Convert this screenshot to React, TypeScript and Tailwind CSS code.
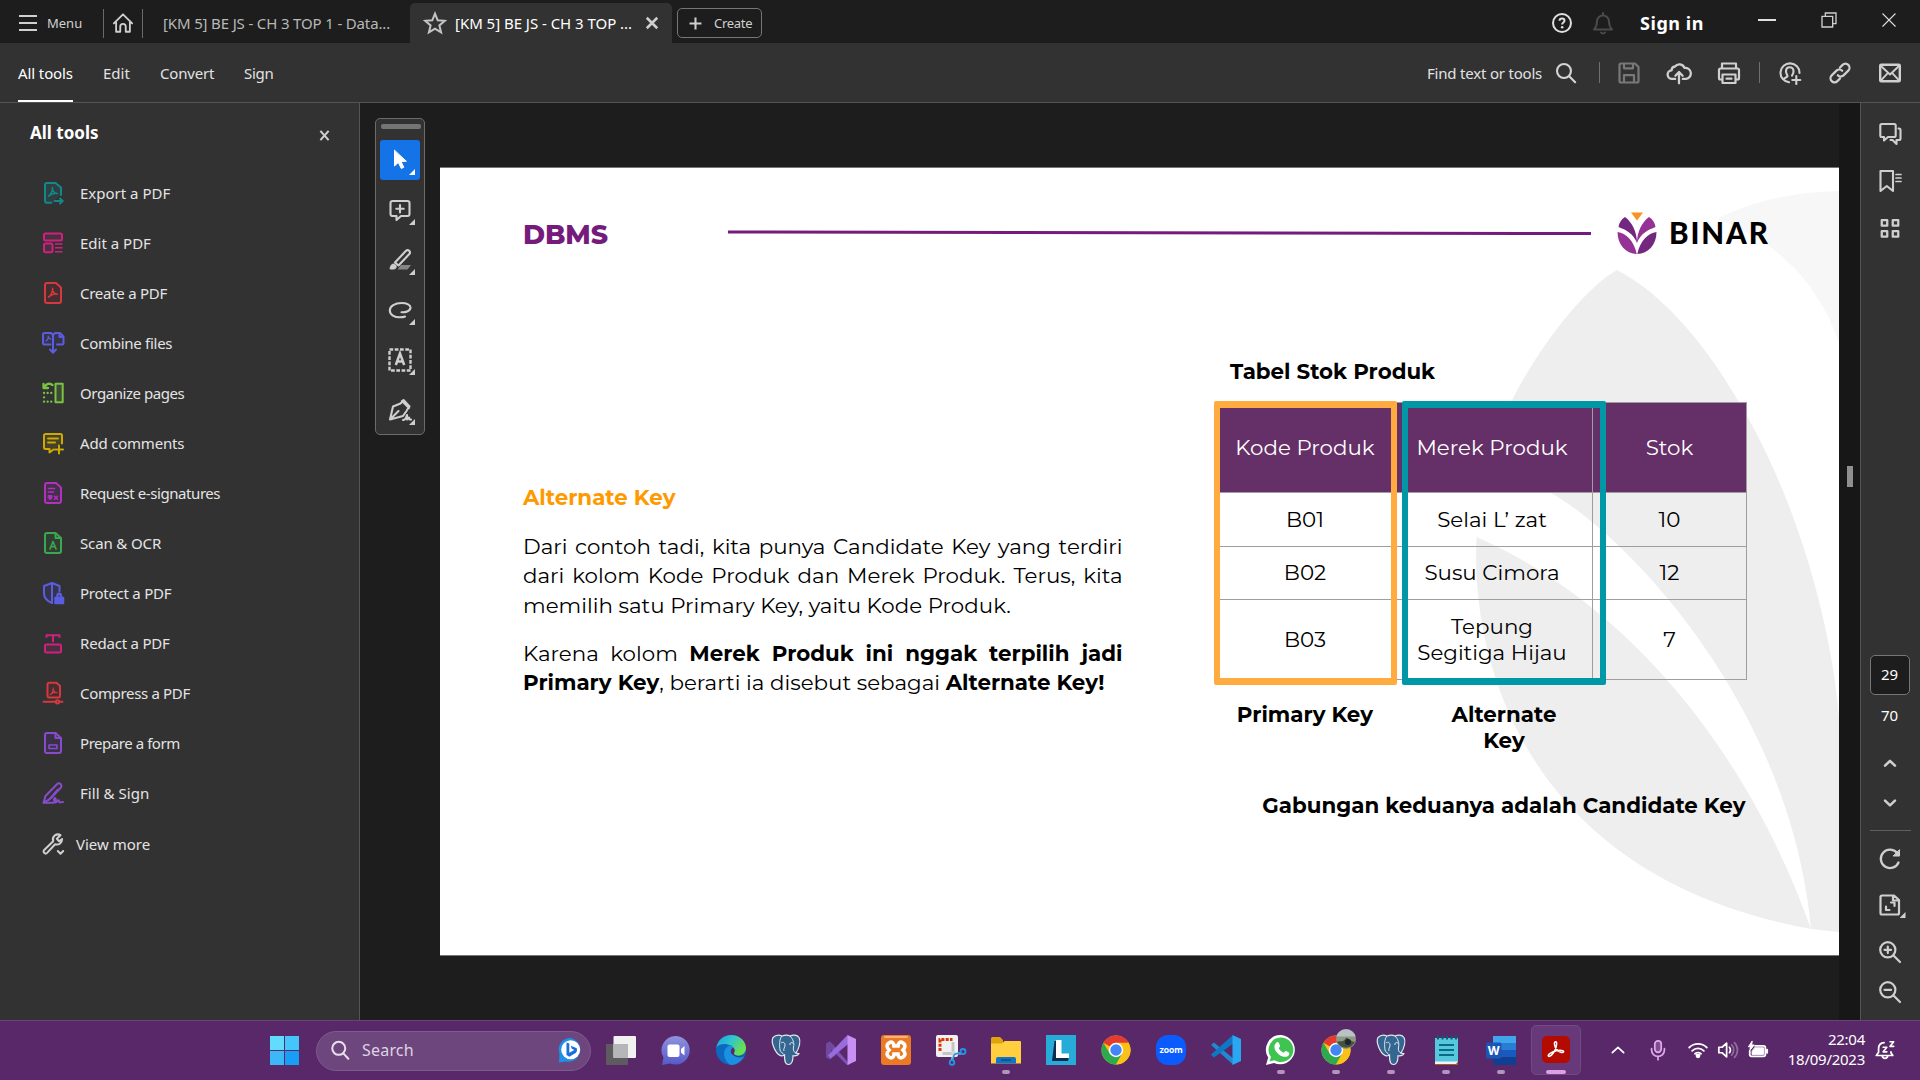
import type { ReactNode } from "react";

type P = { children?: ReactNode; c?: string; s?: number; w?: number; box?: number };

/* Stroke icon on a square grid, drawn with the current text colour. */
function Ico({ children, c = "", s = 24, w = 2, box = 24 }: P) {
  return (
    <svg
      width={s}
      height={s}
      viewBox={`0 0 ${box} ${box}`}
      fill="none"
      stroke="currentColor"
      strokeWidth={w}
      strokeLinecap="round"
      strokeLinejoin="round"
      className={`block shrink-0 ${c}`}
    >
      {children}
    </svg>
  );
}

const Swoosh = ({ t }: { t?: string }) => (
  <path
    transform={t}
    strokeWidth={1.5}
    d="M7.800 15.600c1.900-.9 4.200-4.600 4-8.600-.6 2.800 1.500 5.800 4.800 5.900-3.200-.7-6.200.3-8.800 2.700"
  />
);

const tools: { label: string; color: string; track: string; icon: ReactNode }[] = [
  {
    label: "Export a PDF",
    color: "text-[#12878c]",
    track: "tracking-[0px]",
    icon: (
      <>
        <path d="M10.500 21.800H6A2 2 0 0 1 4 19.800V4A2 2 0 0 1 6 2h8.500L20 6.500V14" fill="#303f40" />
        <Swoosh t="translate(-.3 -.5)" />
        <path d="M13.500 20h8M19 17.500l2.700 2.500-2.700 2.500" />
      </>
    ),
  },
  {
    label: "Edit a PDF",
    color: "text-[#cf2080]",
    track: "tracking-[0px]",
    icon: (
      <>
        <rect x="3" y="2.500" width="18" height="7" rx="1.500" fill="#4a2f3e" />
        <rect x="3" y="12.500" width="8.500" height="8.800" rx="1.500" fill="#4a2f3e" />
        <path d="M14 13h7.500M14 16.800h7.500M14 20.800h7.500" strokeWidth="1.500" strokeLinecap="butt" />
      </>
    ),
  },
  {
    label: "Create a PDF",
    color: "text-[#d7373f]",
    track: "tracking-[-0.270px]",
    icon: (
      <>
        <path d="M4 4A2 2 0 0 1 6 2h9L20 6.500V20a2 2 0 0 1-2 2H6a2 2 0 0 1-2-2Z" fill="#432f30" />
        <Swoosh t="translate(-.2 .3)" />
      </>
    ),
  },
  {
    label: "Combine files",
    color: "text-[#5c5ce0]",
    track: "tracking-[-0.280px]",
    icon: (
      <>
        <path d="M9.500 13.500H4A1.500 1.500 0 0 1 2 12V3.500A1.500 1.500 0 0 1 3.500 2H10l2 2 2-2h5l3.500 3.500V12a1.500 1.500 0 0 1-1.500 1.500h-5" fill="#35354a" />
        <path d="M12 3.500v18M9 18.500l3 3.200 3-3.200M18.500 2.500v3.500h3.500" />
        <path d="M5 10c1.500-1 2.500-3 2.300-5 .2 2 1 3 2.700 3.200" strokeWidth="1.200" />
      </>
    ),
  },
  {
    label: "Organize pages",
    color: "text-[#7bc143]",
    track: "tracking-[-0.440px]",
    icon: (
      <>
        <rect x="14.500" y="2.800" width="7.200" height="18.400" fill="#3f4a36" />
        <path d="M11.500 4C8.500 1.500 5 3 3.500 6M2.500 3v4h4.500" strokeWidth="2.300" />
        <path d="M3 12h9M3 16.300h.1M3 20.700h9" strokeDasharray="0.100 3.500" strokeWidth="2.300" />
      </>
    ),
  },
  {
    label: "Add comments",
    color: "text-[#ccaa00]",
    track: "tracking-[-0.200px]",
    icon: (
      <>
        <path d="M12.500 18.500 8.500 21.500V18H4.500A1.500 1.500 0 0 1 3 16.500v-12A1.500 1.500 0 0 1 4.500 3h15A1.500 1.500 0 0 1 21 4.500v8" fill="#45412b" />
        <path d="M7 7.500h10M7 11.500h7M18 14.500v8M14 18.500h8" />
      </>
    ),
  },
  {
    label: "Request e-signatures",
    color: "text-[#b130bd]",
    track: "tracking-[-0.430px]",
    icon: (
      <>
        <path d="M4 4A2 2 0 0 1 6 2h9L20 6.500V20a2 2 0 0 1-2 2H6a2 2 0 0 1-2-2Z" fill="#43304a" />
        <path d="M7.500 7.500h6M7.500 11h5" strokeWidth="1.700" />
        <path d="M7.500 14.500h3.500v2.500l-1.800 2-1.700-2Z" fill="currentColor" strokeWidth="1" />
        <path d="M13.500 15.200l3 3M16.500 15.200l-3 3" strokeWidth="1.600" />
      </>
    ),
  },
  {
    label: "Scan & OCR",
    color: "text-[#3da74e]",
    track: "tracking-[-0.130px]",
    icon: (
      <>
        <path d="M4 4A2 2 0 0 1 6 2h8.500L20 7V20a2 2 0 0 1-2 2H6a2 2 0 0 1-2-2Z" fill="#303f33" />
        <path d="M14.500 2.500V7H19.500" />
        <path d="M9 18l3-7.500L15 18M10 15.800h4" strokeWidth="1.600" />
      </>
    ),
  },
  {
    label: "Protect a PDF",
    color: "text-[#5c5ce0]",
    track: "tracking-[-0.260px]",
    icon: (
      <>
        <path d="M11 22c-5-2-8-5-8-9.500V5l8-3 7.500 3v5.500" fill="#35354a" />
        <path d="M11 2v20" />
        <path d="M14 22.500v-6h8.500v6ZM16 16v-1.500a2.200 2.200 0 0 1 4.400 0V16" fill="currentColor" strokeWidth="1.500" />
        <circle cx="18.200" cy="15" r=".8" fill="#323232" stroke="none" />
      </>
    ),
  },
  {
    label: "Redact a PDF",
    color: "text-[#cf2080]",
    track: "tracking-[-0.200px]",
    icon: (
      <>
        <path d="M5.500 6V4.300h13V6M12 4.500V10.500" />
        <rect x="4" y="13.500" width="16" height="8" rx="1.200" fill="#4a2f3e" />
      </>
    ),
  },
  {
    label: "Compress a PDF",
    color: "text-[#d7373f]",
    track: "tracking-[-0.330px]",
    icon: (
      <>
        <path d="M6.500 3A1.500 1.500 0 0 1 8 1.800h7.500L19 5v10a1.500 1.500 0 0 1-1.500 1.500H8A1.500 1.500 0 0 1 6.500 15Z" fill="#432f30" />
        <Swoosh t="translate(3 1.500) scale(.78)" />
        <path d="M2.500 20.800h12M18.500 20.800h3" />
        <circle cx="16.500" cy="20.800" r="1.600" />
      </>
    ),
  },
  {
    label: "Prepare a form",
    color: "text-[#864ccc]",
    track: "tracking-[-0.450px]",
    icon: (
      <>
        <path d="M4 4A2 2 0 0 1 6 2h8.500L20 7V20a2 2 0 0 1-2 2H6a2 2 0 0 1-2-2Z" fill="#3a3048" />
        <path d="M14.500 2.500V7H19.500" />
        <rect x="8" y="14" width="8" height="3.500" strokeWidth="1.600" />
      </>
    ),
  },
  {
    label: "Fill & Sign",
    color: "text-[#864ccc]",
    track: "tracking-[0.050px]",
    icon: (
      <>
        <path d="M16 3.200a2.500 2.500 0 0 1 3.700 3.500L9 18l-6.500 3.700L4.500 15Z" />
        <path d="M7 19.500 16.500 8.500" strokeWidth="1.300" />
        <path d="M3 21.800h9.500c2.500-1 3-4.500 1.500-4.800-1.500 0-1.500 4 .5 4.500 1.500 0 2-2.500 3-2.200s0 2 1.500 2.200 1-1 3-.5" />
      </>
    ),
  },
];

function TopBar() {
  return (
    <header className="flex h-[43px] shrink-0 items-center bg-[#1d1d1d] pt-[3px] text-[#d0d0d0]">
      <div className="ml-[19px] flex w-[84px] items-center gap-[10px]">
        <div className="flex w-[18px] flex-col gap-[5px]">
          <i className="h-[2px] bg-[#d0d0d0]" />
          <i className="h-[2px] bg-[#d0d0d0]" />
          <i className="h-[2px] bg-[#d0d0d0]" />
        </div>
        <span className="pt-px text-[13px]">Menu</span>
      </div>
      <div className="flex h-[29px] w-[40px] items-center justify-center border-x border-[#6a6a6a]">
        <Ico s={22} w={2}>
          <path d="M2 12.500 12 2.500l10 10M4.500 11v10.500H9V16a3 3 0 0 1 6 0v5.500h4.500V11" />
        </Ico>
      </div>
      <div className="ml-[20px] w-[247px] text-[15px] tracking-[-0.150px] whitespace-nowrap text-[#b8b8b8]">
        [KM 5] BE JS - CH 3 TOP 1 - Data...
      </div>
      <div className="flex h-[40px] w-[262px] items-center rounded-t-[5px] bg-[#323232] text-white">
        <Ico s={24} w={2} c="ml-[13px] text-[#c4c4c4]">
          <path strokeLinejoin="miter" d="m12 2.600 2.700 6.700 7.100.500-5.400 4.600 1.700 7-6.100-3.800-6.100 3.800 1.700-7L2.200 9.800l7.100-.500Z" />
        </Ico>
        <span className="ml-[8px] w-[190px] text-[15px] tracking-[-0.030px] whitespace-nowrap">[KM 5] BE JS - CH 3 TOP ...</span>
        <Ico s={14} w={4.400} c="text-[#cfcfcf]">
          <path strokeLinecap="butt" d="M3 3l18 18M21 3 3 21" />
        </Ico>
      </div>
      <div className="ml-[5px] flex h-[30px] w-[85px] items-center rounded-[5px] border border-[#767676] pl-[11px]">
        <Ico s={13} w={3.800} c="text-[#d0d0d0]">
          <path strokeLinecap="butt" d="M12 1v22M1 12h22" />
        </Ico>
        <span className="ml-[12px] pt-px text-[13px] tracking-[-0.300px]">Create</span>
      </div>
      <Ico s={22} w={2.200} c="ml-auto text-[#e0e0e0]">
        <circle cx="12" cy="12" r="9.800" />
        <path d="M9.300 9.600c.2-3.400 5.400-3.200 5.400-.1 0 1.900-2.500 2-2.500 4" strokeWidth="2.200" strokeLinecap="butt" />
        <circle cx="12.200" cy="16.700" r="1.400" fill="currentColor" stroke="none" />
      </Ico>
      <Ico s={24} w={2} c="ml-[18px] text-[#4b4b4b]">
        <path d="M3 18.500c2-2 3-4 3-8a6 6 0 0 1 12 0c0 4 1 6 3 8ZM10 21.500c1 1.300 3 1.300 4 0M12 2v2" />
      </Ico>
      <span className="ml-[25px] w-[64px] text-[18px] leading-none font-bold tracking-[0.550px] whitespace-nowrap text-white">Sign in</span>
      <div className="ml-[54px] flex -translate-y-[3px] items-center">
        <div className="h-[2px] w-[18px] bg-[#e0e0e0]" />
        <Ico s={16} w={2} c="ml-[45px] text-[#d0d0d0]">
          <path strokeLinejoin="miter" d="M1.500 6.500h16v16h-16ZM6.500 6V1.500h16v16H18" />
        </Ico>
        <Ico s={14} w={2.400} c="mr-[24px] ml-[45px] text-[#e0e0e0]">
          <path d="M1.500 1.500l21 21M22.500 1.500l-21 21" />
        </Ico>
      </div>
    </header>
  );
}

function ToolBar() {
  return (
    <nav className="flex h-[60px] shrink-0 items-center border-b border-[#545454] bg-[#323232] text-[15px] text-[#e2e2e2]">
      <div className="ml-[18px] flex h-full w-[55px] flex-col justify-between text-white">
        <span className="mt-[19px] leading-[22px] tracking-[-0.100px] whitespace-nowrap">All tools</span>
        <i className="h-[2px] bg-white" />
      </div>
      <span className="ml-[30px] w-[57px] pt-px">Edit</span>
      <span className="w-[84px] pt-px tracking-[-0.200px]">Convert</span>
      <span className="pt-px tracking-[-0.300px]">Sign</span>
      <span className="ml-auto w-[127px] pt-px tracking-[-0.200px] whitespace-nowrap">Find text or tools</span>
      <Ico s={22} w={2.300} c="ml-px text-[#d4d4d4]">
        <circle cx="9.800" cy="9.800" r="7.600" />
        <path d="m15.500 15.500 6.500 6.500" />
      </Ico>
      <i className="ml-[22px] h-[21px] w-px bg-[#6e6e6e]" />
      <Ico s={24} w={2.200} c="ml-[17px] text-[#787878]">
        <path d="M2.500 4A1.500 1.500 0 0 1 4 2.500h14L21.500 6v14a1.500 1.500 0 0 1-1.500 1.500H4A1.500 1.500 0 0 1 2.500 20ZM7 2.500v4.800h9V2.500M7 21.500v-7.300h10v7.300" />
      </Ico>
      <Ico s={26} w={2.100} c="ml-[25px] text-[#d0d0d0]">
        <path d="M8.500 17.500H5.800a4 4 0 0 1-.6-8A3.500 3.500 0 0 1 8.300 6 5 5 0 0 1 17 7.300a5 5 0 0 1 1.500 10.200h-3M12 21.500v-10M8.700 14.500 12 11l3.300 3.500" />
      </Ico>
      <Ico s={24} w={2.200} c="ml-[25px] text-[#d0d0d0]">
        <path d="M5 18.500H3.500A1.500 1.500 0 0 1 2 17V9a1.500 1.500 0 0 1 1.500-1.500h17A1.500 1.500 0 0 1 22 9v8a1.500 1.500 0 0 1-1.500 1.500H19M5 7V2.500h14V7M5.500 13.500h13v8.500h-13ZM9.500 17.700h5" />
      </Ico>
      <i className="ml-[18px] h-[21px] w-px bg-[#6e6e6e]" />
      <Ico s={24} w={2.100} c="ml-[18px] text-[#d0d0d0]">
        <path d="M11 21.300A9.500 9.500 0 1 1 21.500 12M5.500 18.500c1-2 3.500-2 4-3.300.3-1.200-1.500-2-1.500-5 0-2.300 1.500-4 3.700-4s3.800 1.700 3.800 4c0 2.500-1.200 3.200-1.500 4.500M18.300 15v8M14.300 19h8" />
      </Ico>
      <Ico s={24} w={2.200} c="ml-[26px] text-[#d0d0d0]">
        <path d="M9.800 14.200a4 4 0 0 0 5.700.2l4.800-4.800a4 4 0 0 0-5.700-5.700L12 6.500M14.200 9.800a4 4 0 0 0-5.700-.2l-4.800 4.800a4 4 0 0 0 5.700 5.700L12 17.500" />
      </Ico>
      <Ico s={24} w={2.400} c="mr-[18px] ml-[26px] text-[#d0d0d0]">
        <rect x="2.200" y="3.700" width="19.600" height="16.600" rx="1" />
        <path d="m3 5 9 8.500L21 5M3 19.300l6.500-7M21 19.300l-6.500-7" strokeWidth="1.900" />
      </Ico>
    </nav>
  );
}

function Sidebar() {
  return (
    <aside className="w-[360px] shrink-0 border-r border-[#545454] bg-[#323232]">
      <div className="flex h-[65px] items-center pr-[29px] pl-[30px]">
        <h2 className="-mt-[6px] flex-1 text-[17px] font-bold text-white">All tools</h2>
        <Ico s={11} w={4.500} c="text-[#d0d0d0]">
          <path strokeLinecap="butt" d="M3 2l18 20M21 2 3 22" />
        </Ico>
      </div>
      <ul className="text-[15px] text-[#e4e4e4]">
        {tools.map((t) => (
          <li key={t.label} className="flex h-[50px] items-center gap-[15px] pl-[41px]">
            <Ico s={24} w={2} c={t.color}>
              {t.icon}
            </Ico>
            <span className={t.track}>{t.label}</span>
          </li>
        ))}
        <li className="flex h-[52px] items-center gap-[11px] pl-[41px]">
          <Ico s={24} w={2} c="text-[#d0d0d0]">
            <path d="M19.500 3.200a5 5 0 0 0-7.300 6L3.200 18a2 2 0 0 0 2.900 2.900l8-8.600c4 1 7-1.500 7-5.300l-3 2.200-2.300-2.400Z" />
            <path d="m16.800 19 2.700 2.700 2.700-2.700" />
          </Ico>
          <span>View more</span>
        </li>
      </ul>
    </aside>
  );
}

const quick: ReactNode[] = [
  <path key="a" fill="currentColor" strokeWidth="1" d="M6.500 2.500v15.500l3.800-3.500 3 6 2.500-1.200-2.700-5.800 4.900-.2Z" />,
  <path key="b" d="M8.500 18H4.500A2 2 0 0 1 2.500 16V5a2 2 0 0 1 2-2h15a2 2 0 0 1 2 2v11a2 2 0 0 1-2 2h-6.500l-4.500 4ZM12 7v7.500M8.300 10.800h7.400" />,
  <g key="c">
    <path d="m7 14.500 11-11.700a2.300 2.300 0 0 1 3.300 3.200L10.500 17.500Z" />
    <path d="M6 16c-3 0-3.500 2-4 5h4c2.500-.3 2.500-2.500 2-3.500Z" fill="currentColor" strokeWidth="1" />
    <path d="M13 17h10l-3.500 4.500H9.500Z" fill="#858585" stroke="none" />
  </g>,
  <path key="d" d="M13.500 14.300c4.500.2 9-1.500 9-4.800 0-2.500-3.500-4.500-9-4.500C7 5 1.800 8 1.800 12.500s5 6.800 9.700 6.800c2.500 0 4.500-.3 5.500-.8" />,
  <g key="e" strokeLinecap="butt">
    <rect x="1.500" y="1.500" width="21" height="21" strokeWidth="2.400" strokeDasharray="3.700 1.550" strokeLinejoin="miter" />
    <path d="m7.800 17 4.200-11.500L16.200 17M9.500 13.500h5" strokeWidth="2.500" strokeLinejoin="miter" />
  </g>,
  <path key="f" d="m14 3 7 7M12.500 5.500l3-3.500 6 6.500-2.500 3.500M12.500 5.500 5 8.500l-3 13 13-3.500 3.500-5M2.500 21l8-8M15 22c2 0 3.500-3 4-5v4.500l2-2 .5 2h1.500" />,
];

function QuickTools() {
  return (
    <div className="absolute top-[15px] left-[15px] flex h-[317px] w-[50px] flex-col items-center rounded-[5px] border border-[#6b6b6b] bg-[#323232] text-[#cfcfcf]">
      <i className="mt-[5px] ml-px h-[5px] w-[40px] rounded-[2px] bg-[#747474]" />
      <div className="mt-[11px] flex flex-col gap-[10px]">
        {quick.map((q, i) => (
          <div
            key={i}
            className={
              i === 0
                ? "relative flex h-[40px] w-[40px] items-center justify-center rounded-[3px] bg-[#1473e6] pr-px pb-px text-white"
                : "relative flex h-[40px] w-[40px] items-center justify-center pr-px pb-px"
            }
          >
            <Ico s={24} w={2.100}>
              {q}
            </Ico>
            <i className="absolute right-[5px] bottom-[5px] h-[6px] w-[6px] bg-current [clip-path:polygon(100%_0,100%_100%,0_100%)]" />
          </div>
        ))}
      </div>
    </div>
  );
}

const cell = "flex items-center justify-center border-r border-b border-[#9e9e9e] pb-[2px] text-center leading-[26px]";
const head = "flex items-center justify-center border-r border-b border-[#9e9e9e] bg-[#652f68] pb-[2px] text-white";

function Slide() {
  return (
    <article className="relative mt-[65px] ml-[80px] h-[787px] w-[1399px] overflow-hidden bg-white font-[Montserrat,sans-serif] text-[21.380px] text-black shadow-[0_-1px_0_#757575,0_1px_0_#757575]">
      <svg className="absolute inset-0" width="1399" height="787" viewBox="440 168 1399 787">
        <path fill="#f7f7f7" d="M1717 219C1750 202 1790 192 1839 191V343C1825 300 1790 245 1717 219Z" />
        <g fill="#eee">
          <path d="M1617 270C1665 295 1708 348 1740 404C1790 487 1830 610 1839 716V932L1811 929C1790 700 1620 530 1549 492L1511 402C1540 345 1585 288 1617 270Z" />
          <path d="M1476.500 537C1610 595 1740 730 1811 929C1540 880 1470 680 1476.500 537Z" />
        </g>
      </svg>

      <div className="relative flex h-full flex-col">
        <div className="mt-[44px] flex h-[44px] items-center pl-[83px]">
          <h1 className="w-[205px] pt-[3px] text-[26.700px] leading-none font-extrabold tracking-[-0.100px] text-[#741b7c]">DBMS</h1>
          <svg width="863" height="8" viewBox="0 0 863 8" className="-mt-[3px]">
            <path d="M0 3 863 4.600" stroke="#741b7c" strokeWidth="3" />
          </svg>
          <svg width="40" height="42" viewBox="0 0 40 42" className="-mt-[2px] ml-[26px]">
            <path d="M14 .5h12L20 8.500Z" fill="#f7931e" />
            <path d="M8 5C15 10 20 20 20 31 16 21 9 18 1.500 15 2 11 4.500 7 8 5Z" fill="#74277f" />
            <path d="M32 5C25 10 20 20 20 31 24 21 31 18 38.500 15 38 11 35.500 7 32 5Z" fill="#943296" />
            <path d="M.5 20C9 21 17 29 19.700 42 9 41.500.500 33 .5 20Z" fill="#943296" />
            <path d="M39.500 20C31 21 23 29 20.300 42 31 41.500 39.500 33 39.500 20Z" fill="#74277f" />
            <path d="M1 18.500C10 20 17.500 26 19.500 36M39 18.500C30 20 22.500 26 20.500 36" stroke="#fff" strokeWidth="1.400" fill="none" />
          </svg>
          <span className="-mt-[3px] ml-[12px] font-[Lato] text-[29.500px] leading-none font-black tracking-[1.900px]">BINAR</span>
        </div>

        <div className="flex pl-[83px]">
          <div className="mt-[226.500px] w-[599.500px] leading-[29.400px]">
            <h3 className="font-bold text-[#ff9900]">Alternate Key</h3>
            <div className="mt-[20px]">
              <p className="[text-align-last:justify]">Dari contoh tadi, kita punya Candidate Key yang terdiri</p>
              <p className="[text-align-last:justify]">dari kolom Kode Produk dan Merek Produk. Terus, kita</p>
              <p>memilih satu Primary Key, yaitu Kode Produk.</p>
            </div>
            <div className="mt-[18.800px]">
              <p className="[text-align-last:justify]">
                Karena kolom <b>Merek Produk ini nggak terpilih jadi</b>
              </p>
              <p>
                <b>Primary Key</b>, berarti ia disebut sebagai <b>Alternate Key!</b>
              </p>
            </div>
          </div>

          <div className="mt-[102px] ml-[95.500px] w-[529px] leading-[26px]">
            <h4 className="pl-[12px] font-bold">Tabel Stok Produk</h4>
            <div className="relative mt-[18px] grid grid-cols-[173px_201px_154px] grid-rows-[90px_54px_53px_80px] border-t border-l border-[#9e9e9e]">
              <div className={head}>Kode Produk</div>
              <div className={head}>Merek Produk</div>
              <div className={head}>Stok</div>
              <div className={cell}>B01</div>
              <div className={cell}>Selai L’ zat</div>
              <div className={cell}>10</div>
              <div className={cell}>B02</div>
              <div className={cell}>Susu Cimora</div>
              <div className={cell}>12</div>
              <div className={cell}>B03</div>
              <div className={cell}>
                Tepung
                <br />
                Segitiga Hijau
              </div>
              <div className={cell}>7</div>
              <i className="absolute -top-[2px] -left-[5px] h-[284px] w-[183px] rounded-[2px] border-x-6 border-y-7 border-[#ffab40]" />
              <i className="absolute -top-[2px] left-[183px] h-[284px] w-[204px] rounded-[2px] border-x-6 border-y-7 border-[#0097a7]" />
            </div>
            <div className="mt-[21px] flex text-center font-bold">
              <span className="w-[174px]">Primary Key</span>
              <span className="ml-[52px] w-[120px]">
                Alternate
                <br />
                Key
              </span>
            </div>
            <p className="mt-[39px] pr-[1.500px] text-right font-bold whitespace-nowrap">Gabungan keduanya adalah Candidate Key</p>
          </div>
        </div>
      </div>
    </article>
  );
}

function Rail() {
  return (
    <aside className="flex w-[60px] shrink-0 flex-col items-center border-l border-[#545454] bg-[#323232] pr-[2px] text-[#cfcfcf]">
      <Ico s={24} w={2.100} c="mt-[19px]">
        <path d="M6 15H3.800A1.500 1.500 0 0 1 2.300 13.500v-10A1.500 1.500 0 0 1 3.800 2h12.400a1.500 1.500 0 0 1 1.500 1.500v10a1.500 1.500 0 0 1-1.500 1.500H10l-4 3.500ZM20.500 6.500h.5a1.500 1.500 0 0 1 1.500 1.500v8.500a1.500 1.500 0 0 1-1.500 1.500h-2.500v4l-4-4h-2" />
      </Ico>
      <Ico s={24} w={2.100} c="mt-[23px]">
        <path d="M2.500 2h12.500v20l-6.200-5-6.300 5Z" />
        <path d="M18 5.500h5M18 9h5M18 12.500h5" strokeWidth="1.700" />
      </Ico>
      <Ico s={22} w={2.500} c="mt-[24px]">
        <path d="M3 3.500h6v6H3ZM15 3.500h6v6h-6ZM3 15.500h6v6H3ZM15 15.500h6v6h-6Z" />
      </Ico>
      <div className="mt-[416px] flex h-[40px] w-[40px] items-center justify-center rounded-[5px] border border-[#767676] bg-[#1d1d1d] pb-px text-[15px] text-white">29</div>
      <span className="mt-[9px] text-[15px] leading-[22px] text-white">70</span>
      <Ico s={14} w={4.400} c="mt-[30px]">
        <path d="M3.500 16.500 12 8.500l8.500 8" />
      </Ico>
      <Ico s={14} w={4.400} c="mt-[26px]">
        <path d="M3.500 8 12 16l8.500-8" />
      </Ico>
      <i className="mt-[20px] ml-[2px] h-px w-[41px] bg-[#5f5f5f]" />
      <Ico s={24} w={2.300} c="mt-[16px]">
        <path d="M20.500 15.500A9.200 9.200 0 1 1 19.500 6.500L21 8" />
        <path d="M21.500 3v6h-6Z" fill="currentColor" strokeWidth="1" />
      </Ico>
      <div className="relative mt-[22px]">
        <Ico s={24} w={2.200}>
          <path d="M2.500 4A1.500 1.500 0 0 1 4 2.500h12l5 4.500v13a1.500 1.500 0 0 1-1.500 1.500H4A1.500 1.500 0 0 1 2.500 20ZM15 3v4.500h5.500" />
          <path d="M8 13.500v3.500h3.500M13 9.500h3.500V13" />
        </Ico>
        <i className="absolute -right-[4px] -bottom-[1px] h-[6px] w-[6px] bg-[#cfcfcf] [clip-path:polygon(100%_0,100%_100%,0_100%)]" />
      </div>
      <Ico s={24} w={2.200} c="mt-[23px]">
        <circle cx="9.800" cy="9.800" r="7.600" />
        <path d="m15.500 15.500 6.500 6.500M9.800 6.500v6.600M6.500 9.800h6.600" />
      </Ico>
      <Ico s={24} w={2.200} c="mt-[16px]">
        <circle cx="9.800" cy="9.800" r="7.600" />
        <path d="m15.500 15.500 6.500 6.500M6.500 9.800h6.600" />
      </Ico>
    </aside>
  );
}

const Chrome = () => (
  <>
    <circle cx="16" cy="16" r="14.500" fill="#fbc116" />
    <path d="M16 16 3.440 8.750A14.500 14.500 0 0 1 28.560 8.750Z" fill="#e33b2e" />
    <path d="M3.440 8.750A14.500 14.500 0 0 0 16 30.500L22.300 19.600 16 16 9.700 19.600Z" fill="#2da94f" />
    <path d="M16 8.750H28.560A14.500 14.500 0 0 1 16 30.500L22.300 19.600Z" fill="#fbc116" />
    <circle cx="16" cy="16" r="7.200" fill="#fff" />
    <circle cx="16" cy="16" r="5.700" fill="#4285f4" />
  </>
);

const Elephant = () => (
  <>
    <path
      d="M3 3.500C6 .5 10 1 12 2c3-1 6-1 8 0 3-1.500 7-1.300 9 1.500 2 3.500.5 10-3 15.500l3 .6c-1 2-3.500 2.500-6 2.200 0 4-.5 8.200-4 8.700-3.500.3-4.500-2.500-4.500-9.500-2 1-3.500 1.500-4.800.3C5 18.500.5 8 3 3.500Z"
      fill="#336791"
      stroke="#e4e8ee"
      strokeWidth="1.200"
    />
    <path d="M12 2C9 5 9.500 12 10 16c.5 2.500 3 3 4.500 5M20 2c3 3 4.500 7 3.500 11-.5 3 0 5 2.500 6M11 9c2-1.500 4-.5 4 2s-2 4-1 6M23 9c-2-1-3.500 0-3 2" fill="none" stroke="#e4e8ee" strokeWidth="1" />
  </>
);

const apps: { art: ReactNode; dot?: boolean; on?: boolean }[] = [
  {
    art: (
      <>
        <rect x="1" y="10" width="22" height="21" rx="1" fill="#5d5a60" />
        <rect x="8.500" y="2" width="22.500" height="22" rx="1" fill="#f1f1f1" />
        <path d="M8.500 10H23v14H8.500Z" fill="#b6b6b8" />
      </>
    ),
  },
  {
    art: (
      <>
        <path d="M16 2A14.300 14.300 0 1 1 10 29.500L2 31l1.500-7.500A14.300 14.300 0 0 1 16 2Z" fill="url(#chat)" />
        <rect x="7.500" y="10.500" width="12" height="12.500" rx="2" fill="#fff" />
        <path d="m21 15 3.500-3v9.500L21 18.500Z" fill="#fff" />
      </>
    ),
  },
  {
    art: (
      <>
        <circle cx="16" cy="16" r="15" fill="#0c69c0" />
        <path d="M1.300 14C2.500 6 9 1 16 1c9 0 15 6.500 15 13 0 5-4 7.500-7.500 7.500-3 0-5.500-1-4.500-3 1-2.500 0-5.500-3-7C10 8.500 3 10 1.300 14Z" fill="url(#edge)" />
        <path d="M9 19.500c0-5 4-8 7-8 2.500 1.300 4 4 3 6.500-1.500 3 1.500 5.500 5.500 5.500 2 0 3.500-.5 4.500-1C26 28 21 31 16 31c-4-2-7-6-7-11.500Z" fill="#1b8fe0" />
        <path d="M18 13.500c2 1.500 2 3.500 1.200 5-.7 2 1 3.800 4.800 3.800 2.500 0 4.500-1 5.500-1.500-5 4-12 1.500-13.500-2-.7-2 .3-4 2-5.300Z" fill="#582868" />
      </>
    ),
  },
  { art: <Elephant /> },
  {
    art: (
      <>
        <path d="M1 10 5 7.500 25 30.500l-3 .5Z" fill="#7a52b8" />
        <path d="M1 9.500 4.500 7.500 10 12l-4 5 5 4-6 4.500-4-2Z" fill="#70489f" />
        <path d="M22.500 1 3 21.500l2.500 3L24.500 9Z" fill="#9a6bdc" />
        <path d="M22.500 1 31 5v22l-8.500 4Z" fill="#c88ff5" />
      </>
    ),
  },
  {
    art: (
      <>
        <rect x="1" y="1" width="30" height="30" rx="3" fill="#ec7a23" />
        <rect x="4" y="2" width="24" height="2" rx="1" fill="#f7b37c" />
        <path d="M9 9c3-2 5 0 5 3h4c0-3 2-5 5-3s2 5 0 7c2 2 3 5 0 7s-5 0-5-3h-4c0 3-2 5-5 3s-2-5 0-7c-2-2-3-5 0-7Z" fill="none" stroke="#fff" strokeWidth="3.600" />
      </>
    ),
  },
  {
    art: (
      <>
        <rect x="1" y="1" width="22" height="22" rx="2" fill="#f1f1f3" />
        <path d="M5 17V5.500h12.500" fill="none" stroke="#d83b01" strokeWidth="3" strokeDasharray="3 1.300" />
        <path d="M18 8v11.500H7.500" fill="none" stroke="#c3c5c8" strokeWidth="3" />
        <path d="m16 19 10 .5M18.500 17 17 27" stroke="#d5d5d5" strokeWidth="2" />
        <circle cx="28" cy="17.500" r="2.500" fill="none" stroke="#2196e8" strokeWidth="1.800" />
        <circle cx="17" cy="28.500" r="2.300" fill="none" stroke="#2196e8" strokeWidth="1.800" />
        <path d="m25.500 18.500-6 2-2 5.500" fill="none" stroke="#2196e8" strokeWidth="1.600" />
      </>
    ),
  },
  {
    dot: true,
    art: (
      <>
        <path d="M1 4.500A1.500 1.500 0 0 1 2.500 3H10l3 3v6H1Z" fill="#e0a30c" />
        <path d="M1 9.500h11L14.500 7H30a1 1 0 0 1 1 1v21.500H1Z" fill="#ffcf40" />
        <path d="M6 29.500V25a2 2 0 0 1 2-2h16a2 2 0 0 1 2 2v4.500Z" fill="#1373c4" />
        <path d="M11 26h10" stroke="#0a4a86" strokeWidth="1.500" />
      </>
    ),
  },
  {
    art: (
      <>
        <rect x="1" y="1" width="30" height="30" fill="#27abd9" />
        <path d="M9.500 7 7 27h16l1-4H13V7Z" fill="#0d2c4f" />
        <path d="M11 6h5.500v13.500H24V24H11Z" fill="#fff" />
      </>
    ),
  },
  { art: <Chrome /> },
  {
    art: (
      <>
        <rect x="1" y="1" width="30" height="30" rx="12" fill="#0b5cff" />
        <text x="16" y="18.800" textAnchor="middle" fontFamily="Montserrat" fontWeight="700" fontSize="8" fill="#fff">
          zoom
        </text>
      </>
    ),
  },
  {
    art: (
      <>
        <path d="m1 11 3-2.500L24 25l-1 5.500Z" fill="#1f8ad2" />
        <path d="M23 1 1 20.500 4 23.500 24 9Z" fill="#0f78c4" />
        <path d="m22.500 1 8.500 4v22l-8.500 4Z" fill="#2aa7f2" />
      </>
    ),
  },
  {
    dot: true,
    art: (
      <>
        <path d="M16.500 1A14.700 14.700 0 1 1 9 29L1 31l2.200-7.500A14.700 14.700 0 0 1 16.500 1Z" fill="#fff" />
        <path d="M16.500 3.500A12.300 12.300 0 1 1 9.500 26.200L4.500 27.500 6 23A12.300 12.300 0 0 1 16.500 3.500Z" fill="#3fc351" />
        <path d="M11.500 8.500c1-.7 2-.4 2.500.7l1 2.300c.3 1-.3 1.700-1.300 2.700 1.300 2.300 3 3.700 5 4.500 1-1.200 1.800-2 2.500-1.700l2.600 1.400c1 .6.700 3.600-2.600 4.400-3 .7-6.700-1-9.500-4.500-3-3.800-3-7.500-.2-9.800Z" fill="#fff" />
      </>
    ),
  },
  {
    dot: true,
    art: (
      <>
        <Chrome />
        <circle cx="26" cy="5" r="10" fill="#8d9a86" />
        <path d="M16.400 2.500a10 10 0 0 1 19.200 0Z" fill="#b9c3c6" />
        <path d="M17 8c4-2 6 1 9-4 2-1 4 4 9 4a10 10 0 0 1-18 0Z" fill="#47513f" />
        <circle cx="28" cy="8" r="3" fill="#20242c" />
      </>
    ),
  },
  { art: <Elephant />, dot: true },
  {
    dot: true,
    art: (
      <>
        <rect x="5" y="4" width="23" height="26" fill="#55c8de" />
        <path d="M5 28h23v3H5Z" fill="#a85b12" />
        <path d="M5 27.500h23l-2 2.500H5Z" fill="#f3f3f3" />
        <path d="M8 1.500v4M12.500 1.500v4M17 1.500v4M21.500 1.500v4M26 1.500v4" stroke="#0f5a76" strokeWidth="2" />
        <path d="M9 11h15M9 16h15M9 21h15" stroke="#0b6a86" strokeWidth="1.800" />
      </>
    ),
  },
  {
    dot: true,
    art: (
      <>
        <path d="M8 2h23v8H8Z" fill="#41a5ee" />
        <path d="M8 9h23v8H8Z" fill="#2b7cd3" />
        <path d="M8 16h23v8H8Z" fill="#185abd" />
        <path d="M8 23h23v8H8Z" fill="#103f91" />
        <rect x="1" y="8.500" width="15.500" height="16" rx="1.500" fill="#1a56b5" />
        <text x="8.700" y="21" textAnchor="middle" fontFamily="Inter" fontWeight="700" fontSize="12" fill="#fff">
          W
        </text>
      </>
    ),
  },
  {
    on: true,
    art: (
      <>
        <rect x="2" y="2" width="28" height="27" rx="5" fill="#b30b00" />
        <path d="M8.300 22c-.8-1.600 4-4.300 8-5.200s7.700-.3 7.300 1-3.600.9-6.400-1.700-3.600-8-1.700-8.400 1.300 4.400-.5 8.400-5.400 7.300-6.700 5.900Z" fill="none" stroke="#fff" strokeWidth="1.500" />
      </>
    ),
  },
];

function Taskbar() {
  return (
    <footer className="flex h-[60px] shrink-0 items-center border-t border-[#67437a] bg-[#582868] text-white">
      <div className="ml-[270px] grid h-[29px] w-[29px] grid-cols-2 gap-px">
        <i className="bg-[#62dcfb]" />
        <i className="bg-[#45c6fa]" />
        <i className="bg-[#3cb8f8]" />
        <i className="bg-[#189ff5]" />
      </div>
      <div className="ml-[17px] flex h-[40px] w-[275px] items-center rounded-full border border-[#80598f] bg-[#6e467e] pr-[7px] pb-px pl-[13px]">
        <Ico s={20} w={2.400} c="text-[#e8dfec]">
          <circle cx="10.500" cy="10" r="7.800" />
          <path d="m16 16 6 6.500" />
        </Ico>
        <span className="ml-[12px] flex-1 text-[16px] tracking-[0.200px] text-[#dfd3e4]">Search</span>
        <svg width="25" height="26" viewBox="0 0 25 26">
          <path d="M12.500 1A11.700 11.700 0 1 1 8 24.500L1 25.500l.5-8.500A11.700 11.700 0 0 1 12.500 1Z" fill="#1f8fe8" />
          <circle cx="12.700" cy="12.800" r="9.500" fill="#fff" />
          <path d="M8.500 5.500 11.300 6.500v9.300l5-2.800-2.500-1.200-1-3 6 2.500c.7 3-.3 4.200-2 5.200l-5.500 3.200-2.800-1.600Z" fill="#1a6fdc" />
        </svg>
      </div>
      <svg width="0" height="0">
        <defs>
          <linearGradient id="edge" x1="0" y1="0" x2="1" y2="0.500">
            <stop offset="0" stopColor="#1e9fdc" />
            <stop offset="0.500" stopColor="#2fc4cf" />
            <stop offset="1" stopColor="#6be04c" />
          </linearGradient>
          <linearGradient id="chat" x1="0" y1="0" x2="0" y2="1">
            <stop offset="0" stopColor="#8f93dc" />
            <stop offset="1" stopColor="#5559c8" />
          </linearGradient>
        </defs>
      </svg>
      <div className="ml-[2px] flex h-full">
        {apps.map((a, i) => (
          <div key={i} className="flex h-full w-[55px] items-center justify-center pb-px">
            <div
              className={
                a.on
                  ? "relative flex h-[50px] w-[50px] items-center justify-center rounded-[5px] border border-[#704a80] bg-[#67397a]"
                  : "relative flex h-[50px] w-[50px] items-center justify-center"
              }
            >
              <svg width="32" height="32" viewBox="0 0 32 32" className="block overflow-visible">
                {a.art}
              </svg>
              {a.dot && <i className="absolute bottom-[1px] left-[21px] h-[4px] w-[8px] rounded-full bg-[#b195bb]" />}
              {a.on && <i className="absolute bottom-0 left-[14px] h-[4px] w-[20px] rounded-full bg-[#dc9ee4]" />}
            </div>
          </div>
        ))}
      </div>
      <Ico s={16} w={2.600} c="mb-px ml-[27px]">
        <path d="m3.500 16 8.500-8 8.500 8" />
      </Ico>
      <Ico s={22} w={1.900} c="mb-px ml-[21px] text-[#e3a8ec]">
        <rect x="8.500" y="2" width="7" height="12.500" rx="3.500" fill="#7d4f8c" />
        <path d="M5 10.500v1.500a7 7 0 0 0 14 0v-1.500M12 19v3.500" />
      </Ico>
      <Ico s={20} w={2.200} c="mb-[2px] ml-[19px]">
        <path d="M1.500 9a15 15 0 0 1 21 0M5 13a10 10 0 0 1 14 0M8.500 16.500a5 5 0 0 1 7 0" />
        <circle cx="12" cy="19" r="1.800" fill="currentColor" />
      </Ico>
      <Ico s={22} w={1.900} c="mb-[2px] ml-[9px]">
        <path d="M2 9v6h3.500l5 4.500v-15L5.500 9ZM13.500 9c1.500 1.500 1.500 4.500 0 6" />
        <path d="M16 6.500c3 3 3 8 0 11M19 4c4.500 4.500 4.500 11.500 0 16" stroke="#8f6c9d" />
      </Ico>
      <Ico s={22} w={2} c="mb-[2px] ml-[8px]">
        <path d="M9 7.500h9a2 2 0 0 1 2 2v7.500a2 2 0 0 1-2 2H5a2 2 0 0 1-2-2v-4M22 11.500v3.500" />
        <path d="M8.500 9.500H18v7.500H5.500v-3.500Z" fill="currentColor" strokeWidth="1" />
        <path d="M5.500 2.500 1.500 8.500h2.300l-.8 4 5-6H5.500Z" fill="currentColor" strokeWidth="1" />
      </Ico>
      <div className="mb-[3px] ml-auto w-[90px] text-right text-[15px] leading-[20px] tracking-[-0.260px]">
        <div>22:04</div>
        <div>18/09/2023</div>
      </div>
      <Ico s={22} w={1.900} c="mr-[24px] mb-[2px] ml-[9px]">
        <path d="M11 4c-4 .3-6 3-6 6.500v4L2.500 18h18L18.500 15v-1M9 18.500c.5 3.500 5.500 3.500 6 0" />
        <path d="M17.500 3h4l-4 5h4M10 9h4l-4 5h4" strokeWidth="1.800" />
      </Ico>
    </footer>
  );
}

export default function App() {
  return (
    <div className="flex h-[1080px] w-[1920px] flex-col overflow-hidden bg-[#1d1d1d] font-['Noto_Sans',sans-serif]">
      <TopBar />
      <ToolBar />
      <div className="flex min-h-0 flex-1">
        <Sidebar />
        <main className="relative w-[1479px] shrink-0 bg-[#1d1d1d]">
          <Slide />
          <QuickTools />
        </main>
        <div className="w-[21px] shrink-0 bg-[#171717] pt-[363px] pl-[8px]">
          <i className="block h-[21px] w-[6px] bg-[#8f8f8f]" />
        </div>
        <Rail />
      </div>
      <Taskbar />
    </div>
  );
}
